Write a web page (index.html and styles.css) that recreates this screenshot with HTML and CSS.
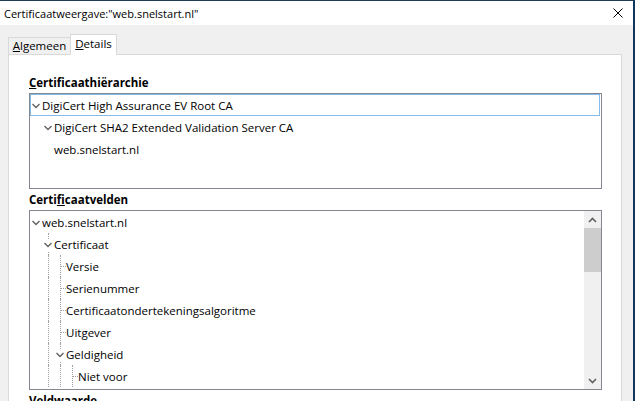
FILE: index.html
```html
<!DOCTYPE html>
<html lang="nl">
<head>
<meta charset="utf-8">
<title>Certificaatweergave</title>
<link rel="stylesheet" href="styles.css">
</head>
<body>
<svg class="defs" width="0" height="0" aria-hidden="true">
  <symbol id="chev" viewBox="0 0 12 22">
    <rect x="3" y="7" width="6" height="12" fill="#fff"/>
    <polyline points="2.5,10 6,13.5 9.5,10" fill="none" stroke="#5f5f5f" stroke-width="1.3"/>
  </symbol>
</svg>
<div class="window">
  <div class="titlebar">
    <span class="title">Certificaatweergave:"web.snelstart.nl"</span>
    <svg class="close" viewBox="0 0 10 10"><path d="M0.5 0.5L9.5 9.5M9.5 0.5L0.5 9.5" stroke="#000" stroke-width="1" fill="none"/></svg>
  </div>
  <div class="tabs">
    <div class="tab"><u>A</u>lgemeen</div>
    <div class="tab active"><u>D</u>etails</div>
  </div>
  <div class="panel">
    <div class="label"><u>C</u>ertificaathiërarchie</div>
    <div class="box hier">
      <div class="row sel"><span class="c"><svg class="chev"><use href="#chev"/></svg></span><span class="txt">DigiCert High Assurance EV Root CA</span></div>
      <div class="row"><span class="c"></span><span class="c"><svg class="chev"><use href="#chev"/></svg></span><span class="txt">DigiCert SHA2 Extended Validation Server CA</span></div>
      <div class="row"><span class="c"></span><span class="c"></span><span class="txt">web.snelstart.nl</span></div>
    </div>
    <div class="label">Certi<u>f</u>icaatvelden</div>
    <div class="box fields">
      <div class="tree">
        <div class="row"><span class="c"><svg class="chev"><use href="#chev"/></svg></span><span class="txt">web.snelstart.nl</span></div>
        <div class="row"><span class="c"></span><span class="c v"><svg class="chev"><use href="#chev"/></svg></span><span class="txt">Certificaat</span></div>
        <div class="row"><span class="c"></span><span class="c v"></span><span class="c t"></span><span class="txt">Versie</span></div>
        <div class="row"><span class="c"></span><span class="c v"></span><span class="c t"></span><span class="txt">Serienummer</span></div>
        <div class="row"><span class="c"></span><span class="c v"></span><span class="c t"></span><span class="txt">Certificaatondertekeningsalgoritme</span></div>
        <div class="row"><span class="c"></span><span class="c v"></span><span class="c t"></span><span class="txt">Uitgever</span></div>
        <div class="row"><span class="c"></span><span class="c v"></span><span class="c v"><svg class="chev"><use href="#chev"/></svg></span><span class="txt">Geldigheid</span></div>
        <div class="row"><span class="c"></span><span class="c v"></span><span class="c v"></span><span class="c t"></span><span class="txt">Niet voor</span></div>
      </div>
      <div class="sb">
        <div class="sb-btn"><svg viewBox="0 0 9 6"><polyline points="1,5 4.5,1.5 8,5" fill="none" stroke="#606060" stroke-width="1.6"/></svg></div>
        <div class="thumb"></div>
        <div class="track"></div>
        <div class="sb-btn"><svg viewBox="0 0 9 6"><polyline points="1,1 4.5,4.5 8,1" fill="none" stroke="#606060" stroke-width="1.6"/></svg></div>
      </div>
    </div>
    <div class="label">Veldwaarde</div>
  </div>
</div>
</body>
</html>
```
FILE: styles.css
```css
* { box-sizing: border-box; }
html, body { margin: 0; padding: 0; height: 100%; overflow: hidden; }
body {
  background: #f0f0f0;
  font-family: "Segoe UI", "Open Sans", "Noto Sans", sans-serif;
  font-size: 11.5px;
  color: #000;
}
.defs { position: absolute; width: 0; height: 0; }
.window {
  height: 100%;
  border-top: 1px solid #1e3b5a;
  border-right: 2px solid #10365c;
  display: flex;
  flex-direction: column;
  overflow: hidden;
}
.titlebar {
  height: 24px;
  flex: none;
  background: #fff;
  display: flex;
  align-items: center;
  justify-content: space-between;
  padding: 0 10px 0 4px;
}
.title { font-size: 11px; }
.close { width: 10px; height: 10px; display: block; }
.tabs {
  height: 29px;
  flex: none;
  display: flex;
  align-items: flex-end;
  padding-left: 8px;
}
.tab {
  height: 17px;
  width: 62px;
  border: 1px solid #d9d9d9;
  border-bottom: none;
  border-right: none;
  background: #f0f0f0;
  text-align: center;
  line-height: 16px;
}
.tab.active {
  height: 21px;
  width: 47px;
  border-right: 1px solid #d9d9d9;
  background: #fff;
  margin-bottom: -1px;
  line-height: 18px;
  position: relative;
  z-index: 1;
}
.panel {
  flex: 1;
  width: 614px;
  margin-left: 8px;
  background: #fff;
  border: 1px solid #d9d9d9;
  padding: 19px 19px 0 20px;
}
.label {
  font-weight: bold;
  height: 17px;
  line-height: 17px;
  margin-bottom: 2px;
}
.box {
  border: 1px solid #828790;
  background: #fff;
}
.hier { height: 96px; margin-bottom: 2px; }
.fields { height: 180px; display: flex; margin-bottom: 2px; }
.tree { flex: 1; overflow: hidden; }
.row {
  height: 22px;
  display: flex;
  align-items: center;
  white-space: nowrap;
}
.row.sel {
  border: 1px solid #84b9ea;
  margin-right: 1px;
}
.row.sel .c:first-child { margin-left: -1px; }
.c {
  width: 12px;
  height: 22px;
  flex: none;
  display: grid;
}
.row.sel .c { height: 20px; }
.c > *, .c::before, .c::after { grid-area: 1 / 1; }
.chev { width: 12px; height: 22px; display: block; }
.row.sel .chev { margin-top: -1px; }
.v::before, .t::before {
  content: "";
  width: 0;
  height: 22px;
  margin-left: 6px;
  border-left: 1px dotted #a0a0a0;
}
.t::after {
  content: "";
  align-self: start;
  justify-self: end;
  width: 5px;
  height: 0;
  margin-top: 11px;
  border-top: 1px dotted #a0a0a0;
}
.sb {
  width: 17px;
  flex: none;
  background: #f0f0f0;
  display: flex;
  flex-direction: column;
}
.sb-btn {
  height: 17px;
  flex: none;
  display: flex;
  align-items: center;
  justify-content: center;
}
.sb-btn svg { width: 9px; height: 6px; display: block; }
.thumb { height: 44px; flex: none; background: #cdcdcd; }
.track { flex: 1; }
```
